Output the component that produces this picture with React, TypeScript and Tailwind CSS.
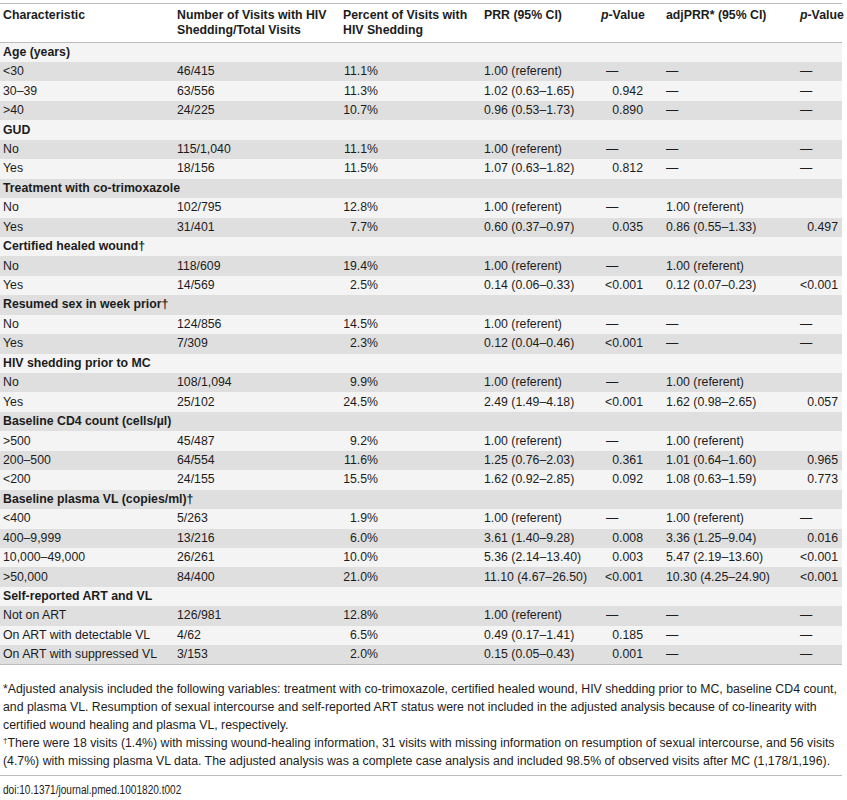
import React from "react";

type Row = {
	label: string;
	head?: boolean;
	n?: string;
	pct?: string;
	prr?: string;
	p?: string;
	adj?: string;
	p2?: string;
};

const D = "—";

const rows: Row[] = [
	{ label: "Age (years)", head: true },
	{ label: "<30", n: "46/415", pct: "11.1%", prr: "1.00 (referent)", p: D, adj: D, p2: D },
	{ label: "30–39", n: "63/556", pct: "11.3%", prr: "1.02 (0.63–1.65)", p: "0.942", adj: D, p2: D },
	{ label: ">40", n: "24/225", pct: "10.7%", prr: "0.96 (0.53–1.73)", p: "0.890", adj: D, p2: D },
	{ label: "GUD", head: true },
	{ label: "No", n: "115/1,040", pct: "11.1%", prr: "1.00 (referent)", p: D, adj: D, p2: D },
	{ label: "Yes", n: "18/156", pct: "11.5%", prr: "1.07 (0.63–1.82)", p: "0.812", adj: D, p2: D },
	{ label: "Treatment with co-trimoxazole", head: true },
	{ label: "No", n: "102/795", pct: "12.8%", prr: "1.00 (referent)", p: D, adj: "1.00 (referent)", p2: "" },
	{ label: "Yes", n: "31/401", pct: "7.7%", prr: "0.60 (0.37–0.97)", p: "0.035", adj: "0.86 (0.55–1.33)", p2: "0.497" },
	{ label: "Certified healed wound†", head: true },
	{ label: "No", n: "118/609", pct: "19.4%", prr: "1.00 (referent)", p: D, adj: "1.00 (referent)", p2: "" },
	{ label: "Yes", n: "14/569", pct: "2.5%", prr: "0.14 (0.06–0.33)", p: "<0.001", adj: "0.12 (0.07–0.23)", p2: "<0.001" },
	{ label: "Resumed sex in week prior†", head: true },
	{ label: "No", n: "124/856", pct: "14.5%", prr: "1.00 (referent)", p: D, adj: D, p2: D },
	{ label: "Yes", n: "7/309", pct: "2.3%", prr: "0.12 (0.04–0.46)", p: "<0.001", adj: D, p2: D },
	{ label: "HIV shedding prior to MC", head: true },
	{ label: "No", n: "108/1,094", pct: "9.9%", prr: "1.00 (referent)", p: D, adj: "1.00 (referent)", p2: "" },
	{ label: "Yes", n: "25/102", pct: "24.5%", prr: "2.49 (1.49–4.18)", p: "<0.001", adj: "1.62 (0.98–2.65)", p2: "0.057" },
	{ label: "Baseline CD4 count (cells/µl)", head: true },
	{ label: ">500", n: "45/487", pct: "9.2%", prr: "1.00 (referent)", p: D, adj: "1.00 (referent)", p2: "" },
	{ label: "200–500", n: "64/554", pct: "11.6%", prr: "1.25 (0.76–2.03)", p: "0.361", adj: "1.01 (0.64–1.60)", p2: "0.965" },
	{ label: "<200", n: "24/155", pct: "15.5%", prr: "1.62 (0.92–2.85)", p: "0.092", adj: "1.08 (0.63–1.59)", p2: "0.773" },
	{ label: "Baseline plasma VL (copies/ml)†", head: true },
	{ label: "<400", n: "5/263", pct: "1.9%", prr: "1.00 (referent)", p: D, adj: "1.00 (referent)", p2: D },
	{ label: "400–9,999", n: "13/216", pct: "6.0%", prr: "3.61 (1.40–9.28)", p: "0.008", adj: "3.36 (1.25–9.04)", p2: "0.016" },
	{ label: "10,000–49,000", n: "26/261", pct: "10.0%", prr: "5.36 (2.14–13.40)", p: "0.003", adj: "5.47 (2.19–13.60)", p2: "<0.001" },
	{ label: ">50,000", n: "84/400", pct: "21.0%", prr: "11.10 (4.67–26.50)", p: "<0.001", adj: "10.30 (4.25–24.90)", p2: "<0.001" },
	{ label: "Self-reported ART and VL", head: true },
	{ label: "Not on ART", n: "126/981", pct: "12.8%", prr: "1.00 (referent)", p: D, adj: D, p2: D },
	{ label: "On ART with detectable VL", n: "4/62", pct: "6.5%", prr: "0.49 (0.17–1.41)", p: "0.185", adj: D, p2: D },
	{ label: "On ART with suppressed VL", n: "3/153", pct: "2.0%", prr: "0.15 (0.05–0.43)", p: "0.001", adj: D, p2: D },
];

// p-values sit right-aligned, dashes stay at the left
const PCell = ({ v, w, dashPad }: { v?: string; w: string; dashPad: string }) => {
	if (!v) return null;
	if (v === D) return <span className={dashPad}>{D}</span>;
	return <div className={`${w} text-right`}>{v}</div>;
};

export default function App() {
	return (
		<div className="w-[847px] bg-white text-[#1c1c1c] font-['Liberation_Sans',Arial,sans-serif] text-[12.3px] pt-[3px]">
			<table className="w-[842px] table-fixed border-collapse">
				<colgroup>
					<col className="w-[174px]" />
					<col className="w-[166px]" />
					<col className="w-[141px]" />
					<col className="w-[117px]" />
					<col className="w-[65px]" />
					<col className="w-[133px]" />
					<col className="w-[46px]" />
				</colgroup>
				<thead>
					<tr className="border-t border-b border-[#bdbdbd] font-bold text-left align-top leading-[15px]">
						<th className="h-[39px] pl-[3px] pt-[4px]">Characteristic</th>
						<th className="pl-[3px] pt-[4px] whitespace-nowrap">
							Number of Visits with HIV
							<br />
							Shedding/Total Visits
						</th>
						<th className="pl-[3px] pt-[4px] whitespace-nowrap">
							Percent of Visits with
							<br />
							HIV Shedding
						</th>
						<th className="pl-[3px] pt-[4px]">PRR (95% CI)</th>
						<th className="pl-[3px] pt-[4px] whitespace-nowrap">
							<i>p</i>-Value
						</th>
						<th className="pl-[3px] pt-[4px] whitespace-nowrap">adjPRR* (95% CI)</th>
						<th className="pl-[4px] pt-[4px] whitespace-nowrap">
							<i>p</i>-Value
						</th>
					</tr>
				</thead>
				<tbody className="border-b border-[#bdbdbd]">
					{rows.map((r, i) => (
						<tr key={i} className={i % 2 === 0 ? "bg-[#f4f4f4]" : "bg-[#dfdfdf]"}>
							{r.head ? (
								<td colSpan={7} className="h-[19.45px] p-0 pl-[3px] font-bold leading-[19px] whitespace-nowrap">
									{r.label}
								</td>
							) : (
								<>
									<td className="h-[19.45px] p-0 pl-[3px] leading-[19px] whitespace-nowrap">{r.label}</td>
									<td className="p-0 pl-[3px] leading-[19px]">{r.n}</td>
									<td className="p-0 pl-[3px] leading-[19px]">
										<div className="w-[35px] text-right">{r.pct}</div>
									</td>
									<td className="p-0 pl-[3px] leading-[19px] whitespace-nowrap">{r.prr}</td>
									<td className="p-0 pl-[3px] leading-[19px]">
										<PCell v={r.p} w="w-[42px]" dashPad="pl-[5px]" />
									</td>
									<td className="p-0 pl-[3px] leading-[19px] whitespace-nowrap">{r.adj}</td>
									<td className="p-0 pl-[3px] leading-[19px]">
										<PCell v={r.p2} w="w-[39px]" dashPad="pl-[1px]" />
									</td>
								</>
							)}
						</tr>
					))}
				</tbody>
			</table>

			<div className="w-[842px] pt-[15px] pb-[5px] pl-[3px] leading-[18px] border-b border-[#bdbdbd]">
				<p className="whitespace-nowrap">
					*Adjusted analysis included the following variables: treatment with co-trimoxazole, certified healed wound, HIV shedding prior to MC, baseline CD4 count,
					<br />
					and plasma VL. Resumption of sexual intercourse and self-reported ART status were not included in the adjusted analysis because of co-linearity with
					<br />
					certified wound healing and plasma VL, respectively.
				</p>
				<p className="whitespace-nowrap">
					<sup className="text-[8px]">†</sup>There were 18 visits (1.4%) with missing wound-healing information, 31 visits with missing information on resumption of sexual intercourse, and 56 visits
					<br />
					(4.7%) with missing plasma VL data. The adjusted analysis was a complete case analysis and included 98.5% of observed visits after MC (1,178/1,196).
				</p>
			</div>

			<div className="pl-[3px] pt-[5px] leading-[18px]">
				<span className="inline-block origin-left scale-x-[0.82]">doi:10.1371/journal.pmed.1001820.t002</span>
			</div>
		</div>
	);
}
